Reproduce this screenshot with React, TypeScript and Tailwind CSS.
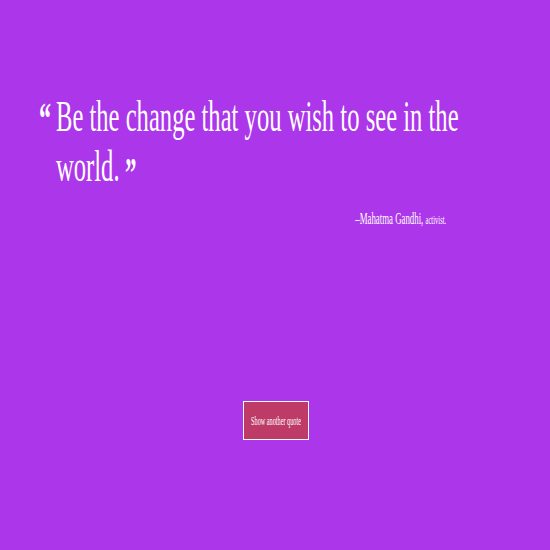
const serif = { fontFamily: '"Liberation Serif", "Times New Roman", serif' };

export default function App() {
  return (
    <div
      className="min-h-[550px] w-full overflow-hidden bg-[#ac36ea] text-white"
      style={serif}
    >
      {/* quote */}
      <div className="pt-[91px] pl-[39px]">
        <div className="flex w-[780px] origin-top-left scale-x-[0.547]">
          <span className="mt-[6px] mr-[9px] text-[44px] font-bold leading-none">
            &ldquo;
          </span>
          <p className="w-[750px] text-[45px] leading-[50px]">
            Be the change that you wish to see in the world.
            <span className="ml-[10px] inline-block align-[-6px] text-[42px] font-bold leading-none">
              &rdquo;
            </span>
          </p>
        </div>
      </div>

      {/* author */}
      <div className="mt-[13px] flex justify-end pr-[104px]">
        <span className="origin-right scale-x-[0.55] whitespace-nowrap">
          <span className="text-[16px]">&ndash;Mahatma Gandhi, </span>
          <span className="text-[12px]">activist.</span>
        </span>
      </div>

      {/* button */}
      <div className="mt-[170px] flex justify-center pl-[2px]">
        <button className="flex h-[39px] w-[66px] items-center justify-center border border-white bg-[#bd3b66]">
          <span className="scale-x-[0.52] whitespace-nowrap text-[12px]">
            Show another quote
          </span>
        </button>
      </div>
    </div>
  );
}
